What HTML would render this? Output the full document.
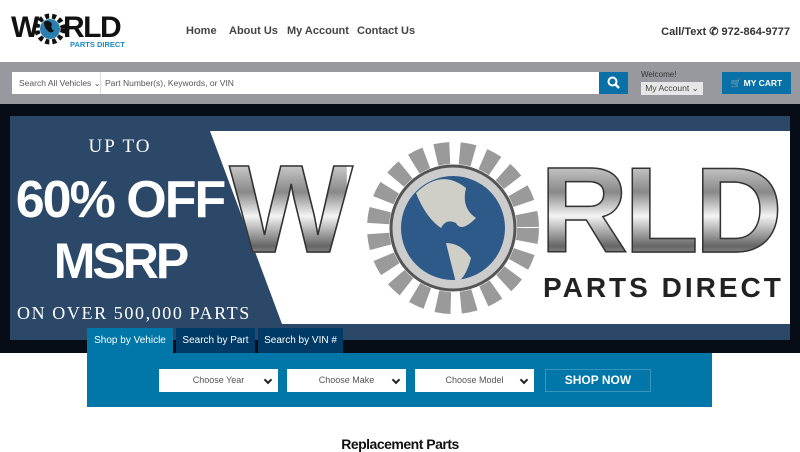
<!DOCTYPE html>
<html><head><meta charset="utf-8"><style>
*{margin:0;padding:0;box-sizing:border-box}
body{width:800px;height:450px;overflow:hidden;background:#fff;font-family:"Liberation Sans",sans-serif;position:relative}
.abs{position:absolute}
.nav a{position:absolute;top:25px;font-size:11px;font-weight:bold;color:#444;text-decoration:none}
.metal{font-family:"Liberation Sans",sans-serif;font-weight:bold;background:linear-gradient(180deg,#eee 0%,#888 35%,#f4f4f4 55%,#666 80%,#ccc 100%);-webkit-background-clip:text;background-clip:text;color:transparent;-webkit-text-stroke:1.5px #333}
.sel{position:absolute;top:369px;width:119px;height:23px;background:#fff;font-size:9px;color:#555;text-align:center;line-height:23px}
.sel:after{content:"";position:absolute;right:7px;top:8px;width:4px;height:4px;border-right:2px solid #222;border-bottom:2px solid #222;transform:rotate(45deg)}
.tab{position:absolute;top:328px;height:25px;color:#fff;font-size:10px;line-height:25px;text-align:center}
</style></head><body>
<!-- header logo -->
<div class="abs" style="left:11px;top:11px;font-size:30px;font-weight:900;color:#111;letter-spacing:-1px;line-height:34px">W</div>
<svg class="abs" style="left:35px;top:12px" width="30" height="34" viewBox="0 0 30 34"><circle cx="15" cy="17" r="13" fill="none" stroke="#111" stroke-width="5" stroke-dasharray="4 3"/><circle cx="15" cy="17" r="10" fill="#2a7fb0"/><path d="M9 10 q5 -3 8 2 q-2 4 2 7 q-3 3 -6 0 q-4 -3 -4 -9z" fill="#111"/></svg>
<div class="abs" style="left:63px;top:11px;font-size:30px;font-weight:900;color:#111;letter-spacing:-1.5px;line-height:34px">RLD</div>
<div class="abs" style="left:70px;top:40px;font-size:7.5px;font-weight:bold;color:#1a8ac4">PARTS DIRECT</div>
<div class="nav"><a style="left:186px">Home</a><a style="left:229px">About Us</a><a style="left:287px">My Account</a><a style="left:357px">Contact Us</a></div>
<div class="abs" style="right:10px;top:25px;font-size:11px;font-weight:bold;color:#333">Call/Text &#9990; 972-864-9777</div>
<!-- search bar -->
<div class="abs" style="left:0;top:62px;width:800px;height:42px;background:#98999f"></div>
<div class="abs" style="left:12px;top:72px;width:587px;height:22px;background:#fff"></div>
<div class="abs" style="left:19px;top:78px;font-size:8.5px;color:#555">Search All Vehicles &#8964;</div>
<div class="abs" style="left:100px;top:72px;width:1px;height:22px;background:#ddd"></div>
<div class="abs" style="left:105px;top:78px;font-size:8.5px;color:#555">Part Number(s), Keywords, or VIN</div>
<div class="abs" style="left:599px;top:72px;width:29px;height:22px;background:#0a70a8"></div>
<svg class="abs" style="left:607px;top:76px" width="13" height="13"><circle cx="5.5" cy="5.5" r="4" fill="none" stroke="#fff" stroke-width="2"/><path d="M8.5 8.5l3.5 3.5" stroke="#fff" stroke-width="2.5"/></svg>
<div class="abs" style="left:641px;top:70px;font-size:8px;color:#333">Welcome!</div>
<div class="abs" style="left:641px;top:82px;width:62px;height:13px;background:#e6e6e6;font-size:8.5px;color:#444;line-height:13px;text-align:center">My Account &#8964;</div>
<div class="abs" style="left:722px;top:72px;width:69px;height:22px;background:#0a70a8;color:#fff;font-size:8.5px;font-weight:bold;line-height:22px;text-align:center">&#128722; MY CART</div>
<!-- hero -->
<div class="abs" style="left:0;top:104px;width:800px;height:249px;background:#060d16"></div>
<div class="abs" style="left:10px;top:116px;width:780px;height:224px;background:#2b4868"></div>
<svg class="abs" style="left:0;top:0" width="800" height="450"><polygon points="210,131 790,131 790,324 282,324" fill="#fff"/></svg>
<div class="abs" style="left:10px;top:136px;width:220px;text-align:center;color:#fff;font-family:'Liberation Serif',serif;font-size:19px;letter-spacing:2px">UP TO</div>
<div class="abs" style="left:10px;top:170px;width:220px;text-align:center;color:#fff;font-size:52px;font-weight:bold;letter-spacing:-2px;line-height:60px">60% OFF</div>
<div class="abs" style="left:20px;top:233px;width:200px;text-align:center;color:#fff;font-size:50px;font-weight:bold;letter-spacing:-3px;line-height:56px">MSRP</div>
<div class="abs" style="left:17px;top:303px;color:#fff;font-family:'Liberation Serif',serif;font-size:18px;letter-spacing:1.6px">ON OVER 500,000 PARTS</div>
<div class="abs metal" style="left:232px;top:150px;font-size:125px;line-height:120px;letter-spacing:-6px;transform:scaleX(1.05)">W</div>
<svg class="abs" style="left:366px;top:138px" width="175" height="180" viewBox="0 0 175 180"><circle cx="87" cy="90" r="75" fill="none" stroke="#9a9a9a" stroke-width="22" stroke-dasharray="14 10"/><circle cx="87" cy="90" r="62" fill="#ccc" stroke="#555" stroke-width="3"/><circle cx="87" cy="90" r="52" fill="#2e5a8a"/><path d="M50 55 q25 -25 50 -5 q-5 20 10 30 q-15 15 -20 5 q-10 -5 -15 5 q-15 -10 -25 -35z M80 105 q15 0 25 15 q-5 20 -15 25 q-5 -20 -10 -40z" fill="#cfcfc8"/></svg>
<div class="abs metal" style="left:540px;top:150px;font-size:122px;line-height:120px;letter-spacing:-4px">RLD</div>
<div class="abs" style="left:543px;top:272px;font-size:28px;font-weight:bold;color:#222;letter-spacing:3px">PARTS DIRECT</div>
<!-- tabs -->
<div class="tab" style="left:87px;width:86px;background:#0077a8">Shop by Vehicle</div>
<div class="tab" style="left:176px;width:79px;background:#003a66">Search by Part</div>
<div class="tab" style="left:258px;width:85px;background:#003a66">Search by VIN #</div>
<div class="abs" style="left:87px;top:353px;width:625px;height:54px;background:#0077a8"></div>
<div class="sel" style="left:159px">Choose Year</div>
<div class="sel" style="left:287px">Choose Make</div>
<div class="sel" style="left:415px">Choose Model</div>
<div class="abs" style="left:545px;top:369px;width:106px;height:23px;border:1px solid #3c93bd;color:#fff;font-size:12px;font-weight:bold;line-height:21px;text-align:center">SHOP NOW</div>
<div class="abs" style="left:0;top:436px;width:800px;text-align:center;font-size:14px;font-weight:bold;color:#111;letter-spacing:-0.5px">Replacement Parts</div>
</body></html>
